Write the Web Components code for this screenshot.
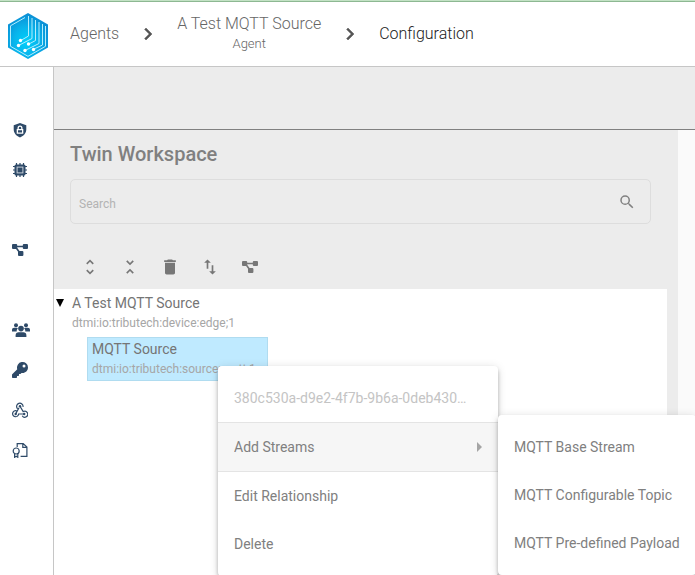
<!DOCTYPE html>
<html lang="en">
<head>
<meta charset="utf-8">
<meta name="viewport" content="width=device-width">
<title>Configuration</title>
<style>
body { margin: 0; font: 14px/20px Roboto, sans-serif; color: #808080; background: #fff; overflow: hidden; }
</style>
</head>
<body>
<app-shell>
  <bread-crumbs slot="header"></bread-crumbs>
  <nav-rail slot="nav"></nav-rail>
  <twin-workspace></twin-workspace>
</app-shell>
<script>
const icons = {
  chevron: ['0 0 24 24', '<path d="M10 6L8.6 7.4 13.2 12l-4.6 4.6L10 18l6-6z" stroke="currentColor" stroke-width=".5"/>'],
  search: ['0 0 24 24', '<path d="M15.5 14h-.79l-.28-.27A6.47 6.47 0 0 0 16 9.5 6.5 6.5 0 1 0 9.5 16c1.61 0 3.09-.59 4.23-1.57l.27.28v.79l5 4.99L20.49 19l-4.99-5zm-6 0a4.5 4.5 0 1 1 0-9 4.5 4.5 0 0 1 0 9z"/>'],
  expand: ['0 0 24 24', '<path d="M12 5.83L15.17 9l1.41-1.41L12 3 7.41 7.59 8.83 9 12 5.83zm0 12.34L8.83 15l-1.41 1.41L12 21l4.59-4.59L15.17 15 12 18.17z"/>'],
  collapse: ['0 0 24 24', '<path d="M7.41 18.59L8.83 20 12 16.83 15.17 20l1.41-1.41L12 14l-4.59 4.59zm9.18-13.18L15.17 4 12 7.17 8.83 4 7.41 5.41 12 10l4.59-4.59z"/>'],
  trash: ['0 0 24 24', '<path d="M6 19c0 1.1.9 2 2 2h8c1.1 0 2-.9 2-2V7H6v12zM19 4h-3.5l-1-1h-5l-1 1H5v2h14V4z"/>'],
  swap: ['0 0 24 24', '<path d="M9 3L5 6.99h3V14h2V6.99h3L9 3zm7 14.01V10h-2v7.01h-3L15 21l4-3.99h-3z"/>'],
  tree: ['0 0 16 16', '<rect x="0" y="2" width="5.200" height="5" rx="1"/><rect x="10.800" y="2" width="5.200" height="5" rx="1"/><rect x="6" y="9" width="5.400" height="5" rx="1"/><path d="M4 4.500h8M3.600 5l4 5.500" fill="none" stroke="currentColor" stroke-width="1.600"/>'],
  shield: ['0 0 16 16', '<path fill-rule="evenodd" d="M8 1l6.3 2.3v4c0 3.8-2.5 6.6-6.3 8.1-3.8-1.500-6.300-4.300-6.300-8.100v-4zM8 3.500a2.500 2.500 0 0 0-2.500 2.500v1H4.700v4.800h6.600V7h-.8V6A2.500 2.500 0 0 0 8 3.500zM8 4.800A1.200 1.200 0 0 1 9.200 6v1H6.800V6A1.200 1.200 0 0 1 8 4.800zM6 8.200h4v2.400H6z"/>'],
  chip: ['0 0 16 16', '<path d="M4.500 1v14M8 1v14M11.500 1v14M1 4.500h14M1 8h14M1 11.500h14" stroke="currentColor" stroke-width="1.200"/><rect x="2.500" y="2.500" width="11" height="11" rx="1.500"/><rect x="4.600" y="4.600" width="6.800" height="6.800" fill="#c5ced8"/><rect x="5.600" y="5.600" width="4.800" height="4.800"/>'],
  users: ['0 0 18 16', '<circle cx="4" cy="3.200" r="2"/><circle cx="14" cy="3.200" r="2"/><path d="M0 9.500V8c0-1.400.9-2.200 2.200-2.200h2.500c.5 0 .9.200 1.200.5C5 7.200 4.600 8.200 4.700 9.500zM18 9.500V8c0-1.400-.9-2.200-2.200-2.200h-2.500c-.5 0-.9.200-1.200.5.9.9 1.300 1.900 1.200 3.200z"/><circle cx="9" cy="6.600" r="2.800"/><path d="M3.600 15v-1.600c0-2 1.300-3.100 3-3.100h4.800c1.700 0 3 1.100 3 3.100V15z"/>'],
  key: ['0 0 512 512', '<path d="M512 176c0 97.200-78.800 176-176 176-11.200 0-22.200-1.100-32.800-3.100l-24 27a24 24 0 0 1-18 8.100H224v40a24 24 0 0 1-24 24h-40v40a24 24 0 0 1-24 24H24a24 24 0 0 1-24-24v-78a24 24 0 0 1 7-17l161.800-161.800A176 176 0 1 1 512 176zM336 128a48 48 0 1 0 96 0 48 48 0 0 0-96 0z"/>'],
  hook: ['0 0 16 16', '<g fill="none" stroke="currentColor" stroke-width="1.200"><path d="M5.600 6.700A3.200 3.200 0 1 1 11 4.900M8 4.300l3.200 5.300A3 3 0 1 1 10.200 13.800M7 5.800L3.800 11.600M4.600 8.900A3 3 0 1 0 6.600 12H12"/></g><circle cx="8" cy="4.300" r="1.200"/><circle cx="3.700" cy="12" r="1.200"/><circle cx="12.200" cy="12" r="1.200"/>'],
  cert: ['0 0 16 16', '<g fill="none" stroke="currentColor" stroke-width="1.200"><path d="M5.200 5V1.600h6L14.900 5v9.400H8.600M10.800 1.600v3.800h4"/><circle cx="4.200" cy="9" r="3"/><path d="M2.600 11.500v3.800l1.600-1 1.600 1v-3.800"/></g>'],
  caret: ['0 0 8 8', '<path d="M0 0h8L4 8z"/>'],
  next: ['0 0 5 10', '<path d="M0 0l5 5-5 5z"/>']
};
const define = (name, html, setup) => customElements.define(name, class extends HTMLElement {
  connectedCallback() {
    if (this.shadowRoot) return;
    const t = document.createElement('template');
    t.innerHTML = html;
    this.attachShadow({ mode: 'open' }).append(t.content.cloneNode(true));
    if (setup) setup(this);
  }
});

define('ui-icon', `<style>
:host { display: inline-flex; flex: none; width: var(--icon, 20px); height: var(--icon, 20px); }
svg { width: 100%; height: 100%; fill: currentColor; }
</style>`, el => {
  const [box, body] = icons[el.getAttribute('name')];
  el.shadowRoot.innerHTML += `<svg viewBox="${box}" aria-hidden="true">${body}</svg>`;
});

define('brand-logo', `<style>:host { display: block; width: 40px; height: 46px; margin-top: 3px; } svg { display: block; }</style>
<svg width="40" height="46" viewBox="0 0 40 46" role="img" aria-label="Home">
<defs><radialGradient id="g" cx=".45" cy=".62" r=".6"><stop offset="0" stop-color="#00d0fb"/><stop offset=".5" stop-color="#08b5ec"/><stop offset="1" stop-color="#0b8fd5"/></radialGradient></defs>
<path d="M20 0l20 11.500v23L20 46 0 34.500v-23z" fill="url(#g)"/>
<g fill="none" stroke="#b5eefd" stroke-width="1">
<path d="M17 4.500L2.500 12.800v20.500L20 43.300l17.500-10V13"/>
<path d="M20.500 3v20L12 28M24 5v20.500l-13.500 7M27.500 7v20.500L20 31.500M31 9v21.500l-14 7M34.500 11v21L25 36.500"/>
</g>
<g fill="#fff"><circle cx="12.500" cy="27.500" r="1.700"/><circle cx="10.500" cy="32.500" r="1.700"/><circle cx="20.500" cy="31" r="1.700"/><circle cx="17" cy="37.500" r="1.700"/><circle cx="25.500" cy="36.500" r="1.700"/></g>
</svg>`);

define('app-shell', `<style>
:host { display: grid; grid-template: auto 1fr / auto 1fr; height: 100vh; }
header { grid-column: 1 / -1; border-top: 1px solid #c3e2c5; border-bottom: 1px solid #c6c6c6; }
nav { border-right: 1px solid #c6c6c6; }
main { display: flex; flex-direction: column; min-width: 0; background: #fafafa; }
.bar { height: 62px; flex: none; background: #ececec; border-bottom: 1px solid #808080; }
</style>
<header><slot name="header"></slot></header>
<nav><slot name="nav"></slot></nav>
<main><div class="bar"></div><slot></slot></main>`);

define('bread-crumbs', `<style>
:host { display: flex; align-items: center; height: 65px; border-top: 1px solid #8db892; padding-left: 8px; box-sizing: border-box; --icon: 24px; font-size: 16px; font-weight: 300; }
a { color: #666; text-decoration: none; text-align: center; }
.first { margin-left: 22px; }
ui-icon { color: #555; margin: 0 17px; }
small { display: block; font-size: 13px; line-height: 20px; }
.now { color: #222; }
</style>
<brand-logo></brand-logo>
<a class="first" href="#agents">Agents</a>
<ui-icon name="chevron"></ui-icon>
<a href="#agent">A Test MQTT Source<small>Agent</small></a>
<ui-icon name="chevron"></ui-icon>
<a class="now" href="#configuration" aria-current="page">Configuration</a>`);

define('nav-rail', `<style>
:host { display: flex; flex-direction: column; width: 53px; padding-top: 43px; color: #2e4a68; --icon: 16px; }
a { display: flex; align-items: center; height: 40px; padding-left: 12px; color: inherit; }
.gap { margin-top: 40px; }
.wide { --icon: 18px; }
</style>
<a href="#s" aria-label="Security"><ui-icon name="shield"></ui-icon></a>
<a href="#d" aria-label="Devices"><ui-icon name="chip"></ui-icon></a>
<a class="gap" href="#t" aria-label="Twins"><ui-icon name="tree"></ui-icon></a>
<a class="gap wide" href="#u" aria-label="Users"><ui-icon name="users"></ui-icon></a>
<a href="#k" aria-label="Keys"><ui-icon name="key"></ui-icon></a>
<a href="#w" aria-label="Webhooks"><ui-icon name="hook"></ui-icon></a>
<a href="#c" aria-label="Certificates"><ui-icon name="cert"></ui-icon></a>`);

define('search-field', `<style>
:host { display: flex; align-items: center; height: 45px; box-sizing: border-box; border: 1px solid #ddd; border-radius: 5px; padding: 0 14px 0 8px; --icon: 18px; }
input { flex: 1; min-width: 0; font: 12px/20px Roboto, sans-serif; color: #666; border: 0; padding: 4px 0 0; background: none; outline: 0; }
input::placeholder { color: #b3b3b3; opacity: 1; }
button { display: flex; border: 0; padding: 0; background: none; color: #808080; }
</style>
<input type="text" placeholder="Search" aria-label="Search"><button aria-label="Search"><ui-icon name="search"></ui-icon></button>`);

define('tree-item', `<style>
:host { display: block; box-sizing: border-box; }
:host([selected]) { width: fit-content; background: #bfeaff; border: 1px solid #b0dcf0; padding: 1px 11px 1px 4px; }
b, small { display: block; white-space: nowrap; line-height: 20px; }
b { font-size: 14px; font-weight: 400; color: #757575; }
small { font-size: 12px; color: #a6a6a6; }
</style><b><slot></slot></b><small><slot name="id"></slot></small>`);

define('menu-item', `<style>
:host { display: block; }
:host([divided]) { border-bottom: 1px solid #e4e4e4; }
button { display: flex; align-items: center; width: 100%; height: 48px; padding: 0 16px; border: 0; background: none; font: 14px/20px Roboto, sans-serif; color: #808080; text-align: left; }
span { flex: 1; min-width: 0; overflow: hidden; text-overflow: ellipsis; white-space: nowrap; }
:host([active]) button { background: #f6f6f6; }
:host([muted]) button { color: #c4c4c4; padding-right: 28px; }
ui-icon { display: none; width: 5px; height: 10px; color: #a5a5a5; }
:host([active]) ui-icon { display: inline-flex; }
</style><button role="menuitem"><span><slot></slot></span><ui-icon name="next"></ui-icon></button>`);

define('pop-menu', `<style>
:host { display: block; box-sizing: border-box; padding: 8px 0; background: #fff; border-radius: 4px; box-shadow: 0 2px 4px -1px #0003, 0 4px 5px #00000024, 0 1px 10px #0000001f; }
</style><slot></slot>`, el => el.setAttribute('role', 'menu'));

define('twin-workspace', `<style>
:host { flex: 1; min-height: 0; display: grid; grid-template-columns: 624px 1fr; }
section { display: flex; flex-direction: column; background: #ececec; min-width: 0; }
h1 { margin: 0; padding: 12px 16px 13px; font-size: 20px; line-height: 24px; font-weight: 500; }
search-field { margin: 0 27px 0 16px; }
.tools { display: flex; padding: 23px 16px 2px; }
.tools button { display: flex; align-items: center; justify-content: center; width: 40px; height: 40px; padding: 0; border: 0; background: none; color: #777; }
.small { --icon: 16px; }
.tree { flex: 1; background: #fff; margin-right: 11px; padding: 4px 0 0 2px; position: relative; }
.root { display: flex; gap: 8px; }
.root button { display: flex; height: 20px; align-items: center; border: 0; padding: 0; background: none; color: #000; --icon: 8px; }
.child { margin: 4px 0 0 31px; }
.context, .streams { position: absolute; }
.context { left: 164px; top: 77px; width: 280px; }
.streams { left: 280px; top: 49px; }
@media (max-width: 640px) { :host { grid-template-columns: 1fr; } }
</style>
<section>
<h1>Twin Workspace</h1>
<search-field></search-field>
<div class="tools" role="toolbar" aria-label="Tree tools">
<button aria-label="Expand all"><ui-icon name="expand"></ui-icon></button>
<button aria-label="Collapse all"><ui-icon name="collapse"></ui-icon></button>
<button aria-label="Delete"><ui-icon name="trash"></ui-icon></button>
<button aria-label="Reorder"><ui-icon name="swap"></ui-icon></button>
<button class="small" aria-label="Show graph"><ui-icon name="tree"></ui-icon></button>
</div>
<div class="tree">
<div class="root"><button aria-label="Collapse" aria-expanded="true"><ui-icon name="caret"></ui-icon></button>
<tree-item>A Test MQTT Source<span slot="id">dtmi:io:tributech:device:edge;1</span></tree-item></div>
<tree-item class="child" selected>MQTT Source<span slot="id">dtmi:io:tributech:source:mqtt;1</span></tree-item>
<pop-menu class="context">
<menu-item divided muted>380c530a-d9e2-4f7b-9b6a-0deb4307e5c1</menu-item>
<menu-item divided active>Add Streams</menu-item>
<menu-item>Edit Relationship</menu-item>
<menu-item>Delete</menu-item>
<pop-menu class="streams">
<menu-item>MQTT Base Stream</menu-item>
<menu-item>MQTT Configurable Topic</menu-item>
<menu-item>MQTT Pre-defined Payload</menu-item>
</pop-menu>
</pop-menu>
</div>
</section>`);
</script>
</body>
</html>
